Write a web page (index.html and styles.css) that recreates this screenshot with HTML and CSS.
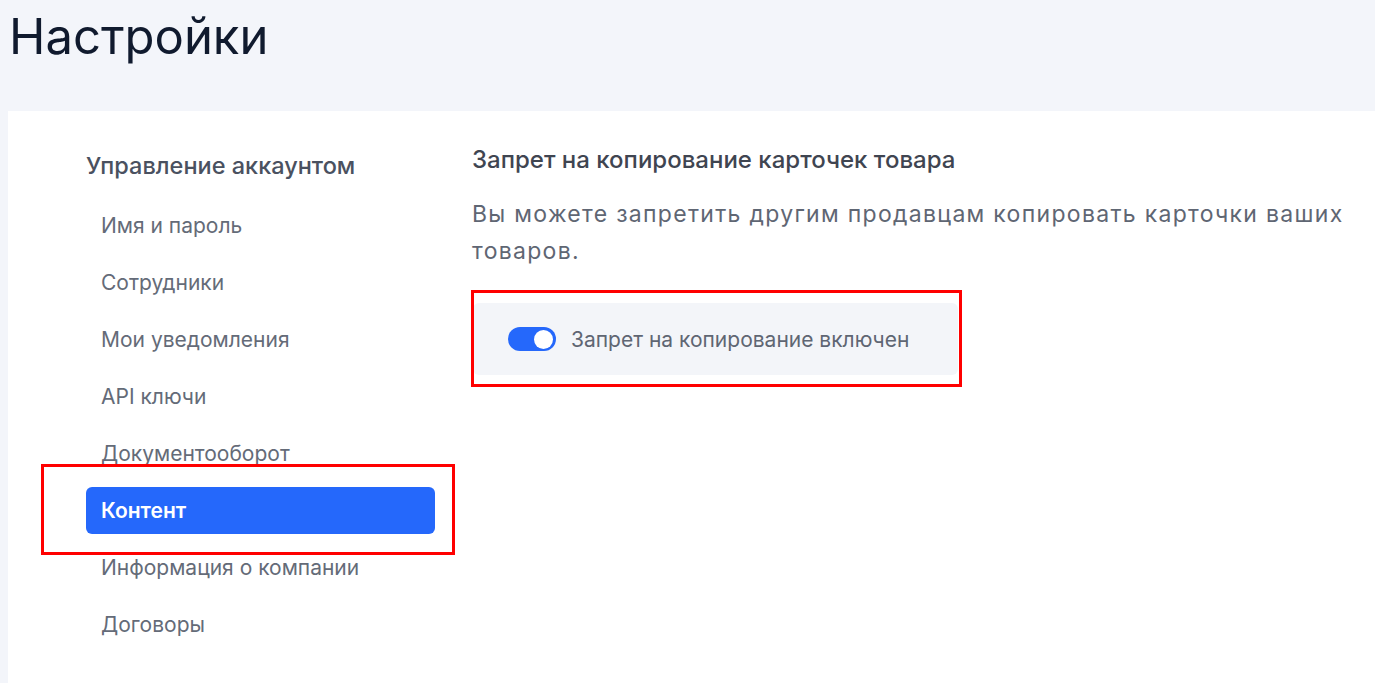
FILE: index.html
```html
<!DOCTYPE html>
<html lang="ru">
<head>
  <meta charset="UTF-8" />
  <meta name="viewport" content="width=device-width, initial-scale=1.0"/>
  <title>Настройки</title>
  <link rel="stylesheet" href="styles.css">
</head>
<body>
  <h1 class="page-title">Настройки</h1>

  <div class="card">
    <aside class="sidebar">
      <h3 class="sidebar-title">Управление аккаунтом</h3>
      <ul class="menu">
        <li><a href="#">Имя и пароль</a></li>
        <li><a href="#">Сотрудники</a></li>
        <li><a href="#">Мои уведомления</a></li>
        <li><a href="#">API ключи</a></li>
        <li><a href="#">Документооборот</a></li>
        <li class="marked">
          <a href="#" class="active">Контент</a>
          <span class="mark mark-menu"></span>
        </li>
        <li><a href="#">Информация о компании</a></li>
        <li><a href="#">Договоры</a></li>
      </ul>
    </aside>

    <section class="content">
      <h3 class="content-title">Запрет на копирование карточек товара</h3>
      <p class="content-text">Вы можете запретить другим продавцам копировать карточки ваших товаров.</p>

      <div class="marked option-wrap">
        <label class="option">
          <input type="checkbox" checked />
          <span class="switch"></span>
          <span class="option-text">Запрет на копирование включен</span>
        </label>
        <span class="mark mark-option"></span>
      </div>
    </section>
  </div>
</body>
</html>
```

FILE: styles.css
```css
body {
  margin: 0;
  background: #f3f5fa;
  font-family: Inter, "Noto Sans", sans-serif;
  color: #5f6673;
}
.page-title {
  margin: 0;
  padding: 6px 0 0 9px;
  height: 111px;
  box-sizing: border-box;
  font-size: 49px;
  font-weight: 400;
  line-height: 62px;
  color: #101a2e;
}
.card {
  margin-left: 8px;
  background: #ffffff;
  min-height: 600px;
  display: flex;
  gap: 37px;
  padding-left: 78px;
}
.sidebar {
  width: 349px;
  flex-shrink: 0;
  padding-top: 41px;
}
.sidebar-title {
  margin: 0 0 22px;
  font-size: 23.5px;
  line-height: 28px;
  font-weight: 500;
  color: #4a5160;
}
.menu {
  list-style: none;
  margin: 0;
  padding: 0;
  display: flex;
  flex-direction: column;
  gap: 10px;
}
.menu a {
  display: block;
  height: 47px;
  line-height: 47px;
  padding-left: 15px;
  border-radius: 6px;
  font-size: 21px;
  color: #646b78;
  text-decoration: none;
}
.menu a.active {
  background: #2568fb;
  color: #ffffff;
  font-weight: 600;
}
.content {
  padding-top: 35px;
  width: 880px;
}
.content-title {
  margin: 0 0 22px;
  font-size: 24px;
  line-height: 28px;
  font-weight: 500;
  color: #3f4551;
}
.content-text {
  margin: 0 0 33px;
  font-size: 23px;
  line-height: 37px;
  letter-spacing: 1.3px;
  color: #5f6673;
}
.option-wrap {
  width: fit-content;
}
.option {
  display: flex;
  align-items: center;
  gap: 15px;
  width: 485px;
  height: 72px;
  box-sizing: border-box;
  padding-left: 35px;
  margin-left: 1px;
  background: #f3f5f9;
  border-radius: 6px;
  cursor: pointer;
}
.option input {
  display: none;
}
.switch {
  position: relative;
  width: 48px;
  height: 24px;
  border-radius: 12px;
  background: #c4c9d2;
}
.switch::after {
  content: "";
  position: absolute;
  top: 2.5px;
  left: 3px;
  width: 19px;
  height: 19px;
  border-radius: 50%;
  background: #ffffff;
}
.option input:checked + .switch {
  background: #2568fb;
}
.option input:checked + .switch::after {
  left: 26px;
}
.option-text {
  font-size: 21px;
  color: #5f6673;
}
.marked {
  position: relative;
}
.mark {
  position: absolute;
  border: 3px solid #ff0000;
  pointer-events: none;
}
.mark-menu {
  top: -23px;
  bottom: -21px;
  left: -45px;
  right: -20px;
}
.mark-option {
  top: -13px;
  bottom: -12px;
  left: -1px;
  right: -4px;
}
```
